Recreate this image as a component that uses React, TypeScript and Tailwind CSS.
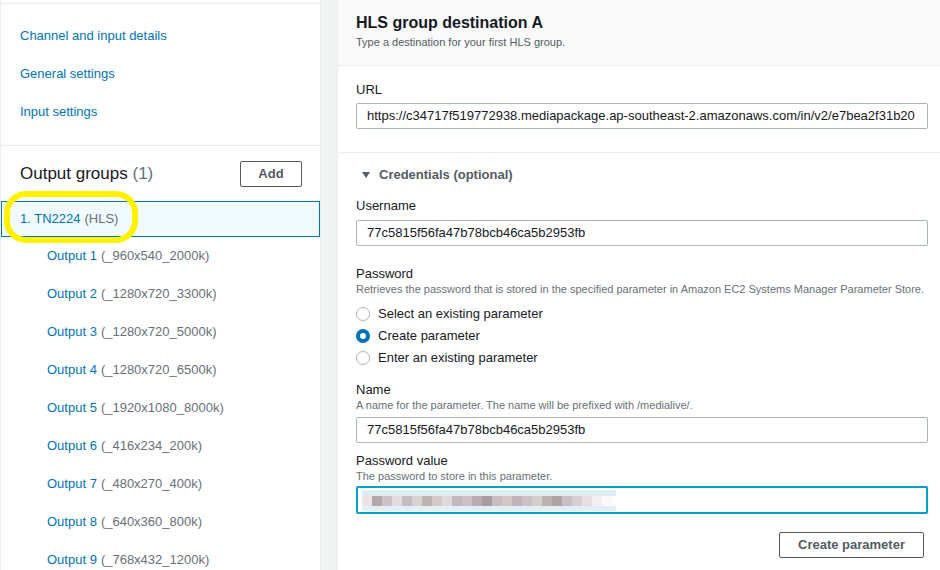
import { ReactNode } from 'react';

const navLinks = ['Channel and input details', 'General settings', 'Input settings'];

const outputs = [
  ['Output 1', '(_960x540_2000k)'],
  ['Output 2', '(_1280x720_3300k)'],
  ['Output 3', '(_1280x720_5000k)'],
  ['Output 4', '(_1280x720_6500k)'],
  ['Output 5', '(_1920x1080_8000k)'],
  ['Output 6', '(_416x234_200k)'],
  ['Output 7', '(_480x270_400k)'],
  ['Output 8', '(_640x360_800k)'],
  ['Output 9', '(_768x432_1200k)'],
];

// pixelated blur over the typed password
const mosaic = [
  'bg-[#ece4e6]', 'bg-[#b3a7aa]', 'bg-[#cdc2c5]', 'bg-[#e2dadc]', 'bg-[#c6bbbe]',
  'bg-[#d9d0d2]', 'bg-[#bfb3b6]', 'bg-[#d4cacc]', 'bg-[#e0d8da]', 'bg-[#c3b8bb]',
  'bg-[#ccc1c4]', 'bg-[#b8adb0]', 'bg-[#a99c9f]', 'bg-[#c8bdc0]', 'bg-[#d2c8ca]',
  'bg-[#c0b5b8]', 'bg-[#cbc0c3]', 'bg-[#d6cdcf]', 'bg-[#bdb1b4]', 'bg-[#b0a4a7]',
  'bg-[#c9bec1]', 'bg-[#d8cfd1]', 'bg-[#e6dfe1]', 'bg-[#f3eff0]', 'bg-[#fbf9fa]',
];

function Label({ children, hint }: { children: ReactNode; hint?: string }) {
  return (
    <div>
      <div className="h-[16px] leading-[16px] text-[13px] text-[#16191f] pt-[1px]">{children}</div>
      {hint && <div className="h-[14px] leading-[14px] text-[11px] text-[#687078] mt-[1px]">{hint}</div>}
    </div>
  );
}

function Field({ value }: { value: string }) {
  return (
    <div className="h-[26px] border border-[#aab7b8] rounded-[2px] pl-[10px] pr-[2px] flex items-center text-[13px] text-[#16191f] whitespace-nowrap overflow-hidden bg-white">
      {value}
    </div>
  );
}

function Radio({ label, checked }: { label: string; checked?: boolean }) {
  return (
    <div className="h-[22px] flex items-center gap-[8px]">
      <span
        className={
          checked
            ? 'w-[14px] h-[14px] rounded-full border-[4px] border-[#0073bb] bg-white'
            : 'w-[14px] h-[14px] rounded-full border border-[#aab7b8] bg-white'
        }
      />
      <span className="text-[13px] text-[#16191f]">{label}</span>
    </div>
  );
}

export default function App() {
  return (
    <div className="w-[940px] h-[570px] overflow-hidden flex bg-white text-[#16191f] font-['Liberation_Sans',Arial,sans-serif]">
      {/* left navigation */}
      <aside className="w-[321px] shrink-0 border-x border-[#eaeded] bg-white">
        <div className="h-[3px]" />
        <nav className="border-t border-[#eaeded] pt-[13px] pb-[14px]">
          {navLinks.map((l) => (
            <div key={l} className="h-[38px] flex items-center pl-[19px] text-[13px] text-[#0073bb]">
              {l}
            </div>
          ))}
        </nav>
        <div className="border-t border-[#eaeded] h-[56px] flex items-center justify-between pl-[19px] pr-[18px]">
          <span className="text-[17px] text-[#16191f]">
            Output groups <span className="text-[#687078]">(1)</span>
          </span>
          <button
            type="button"
            className="w-[62px] h-[26px] border border-[#545b64] rounded-[2px] text-[13px] font-bold text-[#545b64]"
          >
            Add
          </button>
        </div>
        <div className="relative h-[36px] border border-[#0073bb] bg-[#f1faff] flex items-center pl-[18px] text-[13px]">
          <span className="text-[#0073bb]">1. TN2224</span>
          <span className="text-[#687078] ml-[4px]">(HLS)</span>
          <div className="absolute left-[2px] top-[-11px] w-[134px] h-[52px] border-[6px] border-[#fff200] rounded-[22px]" />
        </div>
        {outputs.map(([name, spec]) => (
          <div key={name} className="h-[38px] flex items-center pl-[46px] text-[13px]">
            <span className="text-[#0073bb]">{name}</span>
            <span className="text-[#687078] ml-[4px]">{spec}</span>
          </div>
        ))}
      </aside>

      {/* gutter */}
      <div className="w-[16px] shrink-0 bg-[#f2f3f3]" />

      {/* destination panel */}
      <main className="flex-1 min-w-0 border-l border-[#eaeded] bg-white">
        <header className="h-[66px] bg-[#fafafa] border-b border-[#eaeded] pl-[18px] pt-[13px]">
          <h2 className="h-[19px] leading-[19px] text-[16px] font-bold text-[#16191f]">HLS group destination A</h2>
          <p className="h-[14px] leading-[14px] mt-[3px] text-[11px] text-[#545b64]">
            Type a destination for your first HLS group.
          </p>
        </header>

        <section className="pl-[18px] pr-[12px] pt-[15px] pb-[23px] border-b border-[#eaeded]">
          <Label>URL</Label>
          <div className="mt-[6px]">
            <Field value="https://c34717f519772938.mediapackage.ap-southeast-2.amazonaws.com/in/v2/e7bea2f31b20" />
          </div>
        </section>

        <section className="pl-[18px] pr-[12px] pt-[12px]">
          <div className="h-[20px] flex items-center pl-[6px] gap-[9px]">
            <svg width="8" height="6" viewBox="0 0 8 6">
              <path d="M0 0H8L4 6Z" fill="#545b64" />
            </svg>
            <span className="text-[13px] font-bold text-[#545b64]">Credentials (optional)</span>
          </div>

          <div className="mt-[12px]">
            <Label>Username</Label>
          </div>
          <div className="mt-[7px]">
            <Field value="77c5815f56fa47b78bcb46ca5b2953fb" />
          </div>

          <div className="mt-[19px]">
            <Label hint="Retrieves the password that is stored in the specified parameter in Amazon EC2 Systems Manager Parameter Store.">
              Password
            </Label>
          </div>
          <div className="mt-[7px]">
            <Radio label="Select an existing parameter" />
            <Radio label="Create parameter" checked />
            <Radio label="Enter an existing parameter" />
          </div>

          <div className="mt-[12px]">
            <Label hint="A name for the parameter. The name will be prefixed with /medialive/.">Name</Label>
          </div>
          <div className="mt-[5px]">
            <Field value="77c5815f56fa47b78bcb46ca5b2953fb" />
          </div>

          <div className="mt-[9px]">
            <Label hint="The password to store in this parameter.">Password value</Label>
          </div>
          <div className="mt-[3px] h-[28px] border-2 border-[#00a1c9] rounded-[2px] bg-white pl-[4px] flex items-center">
            <div className="w-[254px] flex flex-col">
              <div className="h-[6px] bg-[#dcecf3]" />
              <div className="h-[10px] flex">
                {mosaic.map((c, i) => (
                  <div key={i} className={`w-[10px] h-full ${c}`} />
                ))}
                <div className="flex-1 bg-white" />
              </div>
              <div className="h-[5px] bg-[#e2eff5]" />
            </div>
          </div>

          <div className="mt-[18px] flex justify-end pr-[4px]">
            <button
              type="button"
              className="w-[145px] h-[26px] border border-[#545b64] rounded-[2px] text-[13px] font-bold text-[#545b64]"
            >
              Create parameter
            </button>
          </div>
        </section>
      </main>
    </div>
  );
}
